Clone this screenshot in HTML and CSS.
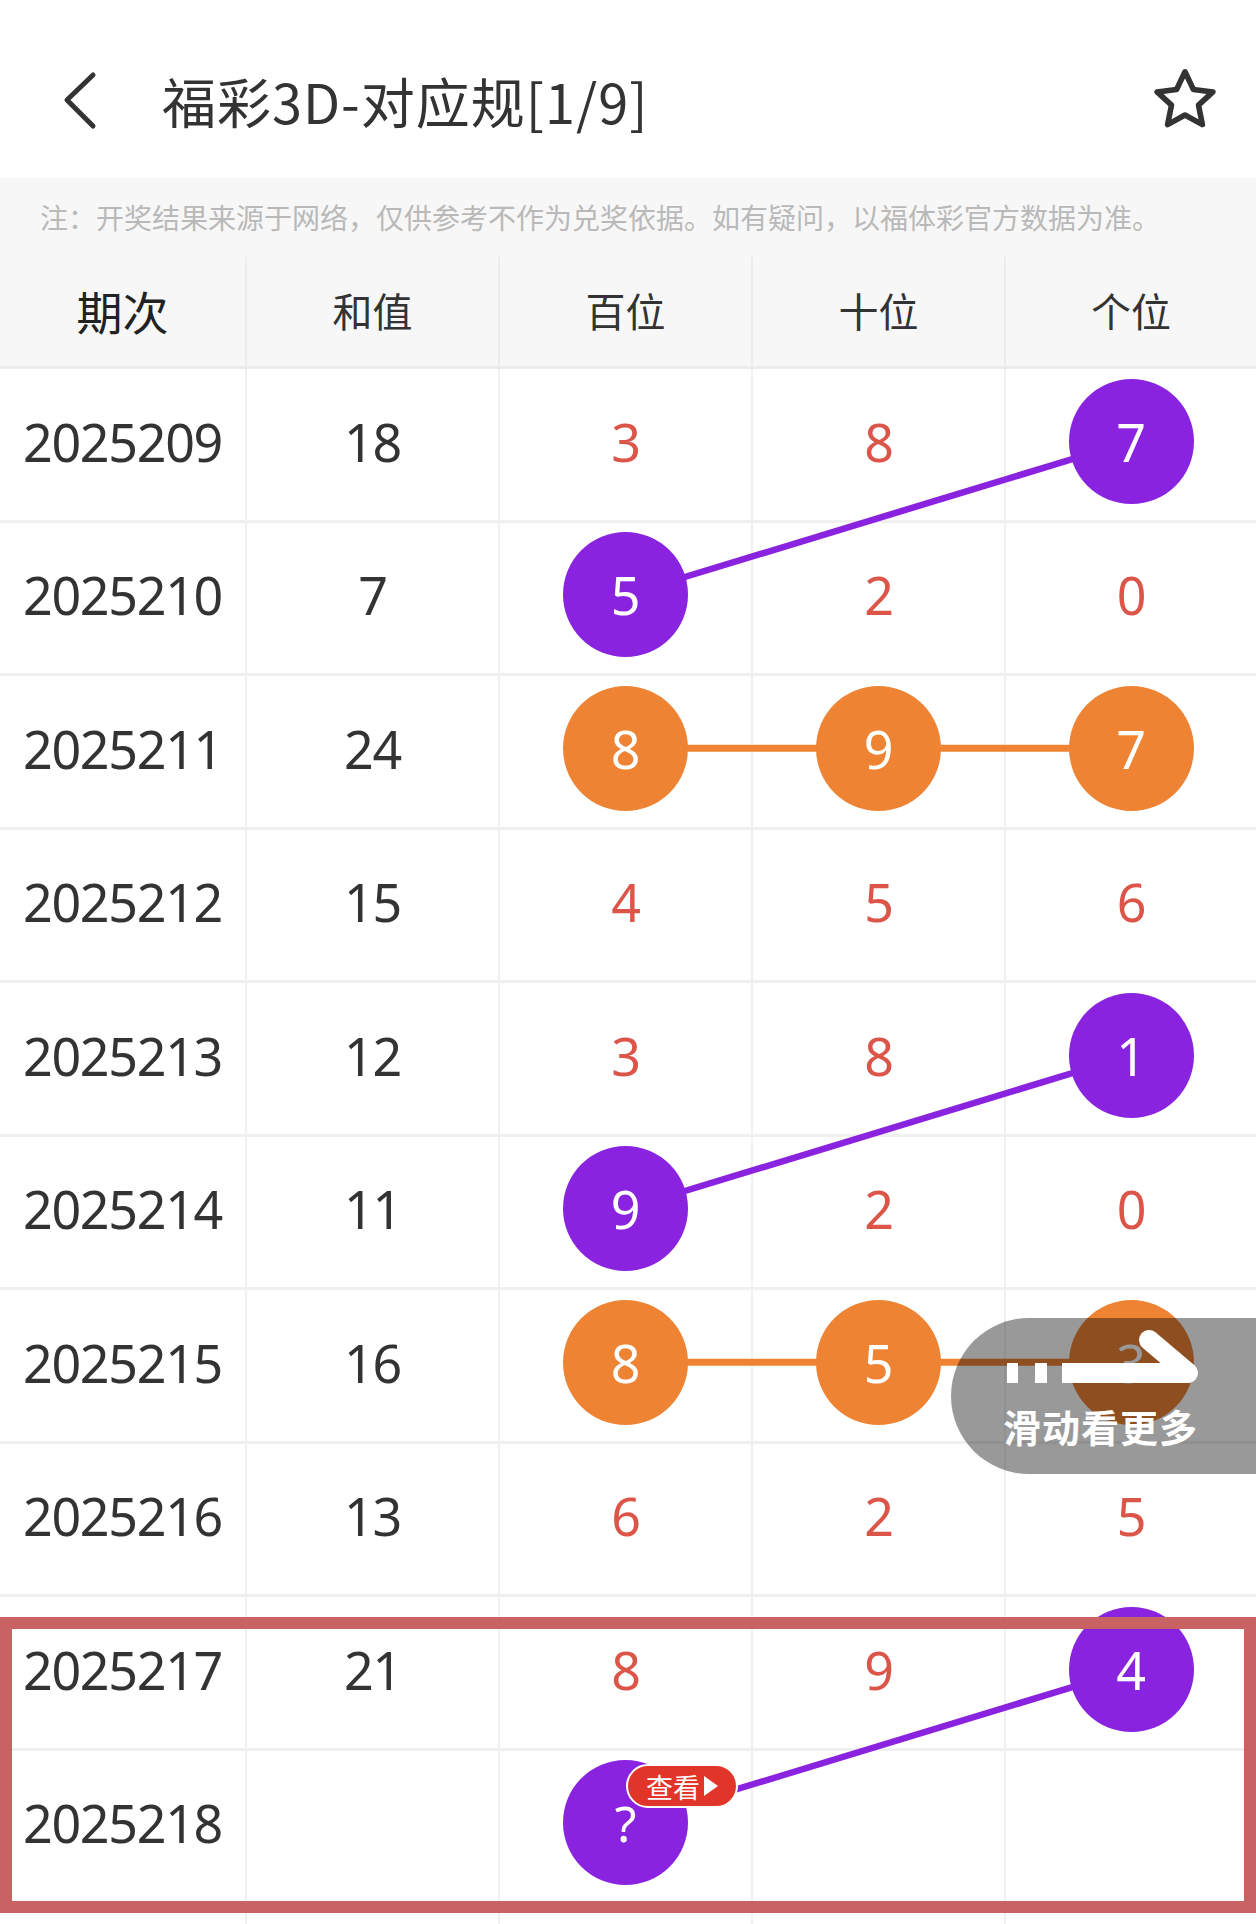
FILE: index.html
```html
<!DOCTYPE html>
<html lang="zh-CN">
<head>
<meta charset="utf-8">
<title>福彩3D-对应规[1/9]</title>
<link rel="stylesheet" href="styles.css">
</head>
<body>
<div class="page">
  <header class="nav">
    <svg class="back" viewBox="0 0 44 60" width="44" height="60"><polyline points="35,5 9,30 35,56" fill="none" stroke="#333" stroke-width="5" stroke-linecap="round" stroke-linejoin="round"/></svg>
    <h1 class="title">福彩3D-对应规[1/9]</h1>
    <svg class="star" viewBox="0 0 24 24" width="72" height="72"><polygon points="12,2.6 14.8,8.5 21.3,9.3 16.5,13.7 17.8,20.2 12,17 6.2,20.2 7.5,13.7 2.7,9.3 9.2,8.5" fill="none" stroke="#333" stroke-width="1.85" stroke-linejoin="round"/></svg>
  </header>
  <div class="notice">注：开奖结果来源于网络，仅供参考不作为兑奖依据。如有疑问，以福体彩官方数据为准。</div>
  <div class="table">
    <div class="thead">
      <div class="th th-main">期次</div>
      <div class="th">和值</div>
      <div class="th">百位</div>
      <div class="th">十位</div>
      <div class="th">个位</div>
    </div>
    <div class="tbody">
      <svg class="links" width="1256" height="1560" viewBox="0 0 1256 1560">
        <line x1="1131" y1="72.25" x2="626.5" y2="225.75" class="lp"/>
        <line x1="626.5" y1="379.25" x2="1131" y2="379.25" class="lo"/>
        <line x1="1131" y1="686.25" x2="626.5" y2="839.75" class="lp"/>
        <line x1="626.5" y1="993.25" x2="1131" y2="993.25" class="lo"/>
        <line x1="1131" y1="1300.25" x2="626.5" y2="1453.75" class="lp"/>
      </svg>
      <div class="row"><div class="td">2025209</div><div class="td">18</div><div class="td red">3</div><div class="td red">8</div><div class="td"><span class="ball purple">7</span></div></div>
      <div class="row"><div class="td">2025210</div><div class="td">7</div><div class="td"><span class="ball purple">5</span></div><div class="td red">2</div><div class="td red">0</div></div>
      <div class="row"><div class="td">2025211</div><div class="td">24</div><div class="td"><span class="ball orange">8</span></div><div class="td"><span class="ball orange">9</span></div><div class="td"><span class="ball orange">7</span></div></div>
      <div class="row"><div class="td">2025212</div><div class="td">15</div><div class="td red">4</div><div class="td red">5</div><div class="td red">6</div></div>
      <div class="row"><div class="td">2025213</div><div class="td">12</div><div class="td red">3</div><div class="td red">8</div><div class="td"><span class="ball purple">1</span></div></div>
      <div class="row"><div class="td">2025214</div><div class="td">11</div><div class="td"><span class="ball purple">9</span></div><div class="td red">2</div><div class="td red">0</div></div>
      <div class="row"><div class="td">2025215</div><div class="td">16</div><div class="td"><span class="ball orange">8</span></div><div class="td"><span class="ball orange">5</span></div><div class="td"><span class="ball orange">3</span></div></div>
      <div class="row"><div class="td">2025216</div><div class="td">13</div><div class="td red">6</div><div class="td red">2</div><div class="td red">5</div></div>
      <div class="row"><div class="td">2025217</div><div class="td">21</div><div class="td red">8</div><div class="td red">9</div><div class="td"><span class="ball purple">4</span></div></div>
      <div class="row"><div class="td">2025218</div><div class="td"></div><div class="td"><span class="ball purple q">?<span class="badge">查看<i class="tri"></i></span></span></div><div class="td"></div><div class="td"></div></div>
      <div class="row"><div class="td"></div><div class="td"></div><div class="td"></div><div class="td"></div><div class="td"></div></div>
    </div>
  </div>
  <div class="mark"></div>
  <div class="swipe">
    <svg class="swipe-arrow" viewBox="0 0 305 80" width="305" height="80">
      <rect x="56" y="45" width="11" height="20" fill="#fff"/>
      <rect x="84" y="45" width="12" height="20" fill="#fff"/>
      <line x1="121" y1="55" x2="236" y2="55" stroke="#fff" stroke-width="20" stroke-linecap="round"/>
      <line x1="198" y1="22" x2="237" y2="55" stroke="#fff" stroke-width="20" stroke-linecap="round"/>
      <rect x="111" y="45" width="14" height="20" fill="#fff"/>
    </svg>
    <div class="swipe-text">滑动看更多</div>
  </div>
</div>
</body>
</html>
```

FILE: styles.css
```css
* { box-sizing: border-box; }
html, body { margin: 0; padding: 0; background: #fff; }
body { width: 1256px; }
.page {
  position: relative;
  width: 1256px;
  height: 1924px;
  overflow: hidden;
  font-family: "Noto Sans", "Noto Sans CJK SC", sans-serif;
  color: #333;
}
.nav {
  height: 178px;
  padding-top: 22px;
  display: flex;
  align-items: center;
}
.back { margin-left: 58px; flex: none; }
.title {
  margin: 0 0 0 60px;
  font-family: "Noto Sans CJK SC", sans-serif;
  font-weight: 400;
  font-size: 54px;
  color: #333;
  flex: 1;
  letter-spacing: 1px;
}
.star { margin-right: 35px; flex: none; }
.notice {
  height: 79px;
  line-height: 79px;
  background: #f7f7f7;
  padding-left: 40px;
  font-family: "Noto Sans CJK SC", sans-serif;
  font-size: 28px;
  color: #b9b9b9;
  white-space: nowrap;
}
.thead, .row {
  display: grid;
  grid-template-columns: 247px 253px 253px 253px 250px;
}
.thead {
  height: 112px;
  background: #f7f7f7;
  border-bottom: 3px solid #ececec;
}
.th {
  display: flex;
  align-items: center;
  justify-content: center;
  padding-bottom: 4px;
  font-family: "Noto Sans CJK SC", sans-serif;
  font-size: 40px;
  color: #333;
  border-right: 2px solid #ececec;
}
.th:last-child, .td:last-child { border-right: 0; }
.th-main { font-size: 46px; font-weight: 400; color: #222; }
.tbody { position: relative; }
.links { position: absolute; left: 0; top: 0; z-index: 1; }
.lp { stroke: #8a23e0; stroke-width: 6.5; }
.lo { stroke: #ee8334; stroke-width: 7; }
.row {
  height: 153.5px;
  background: #fff;
  border-bottom: 3px solid #f0f0f0;
}
.td {
  display: flex;
  align-items: center;
  justify-content: center;
  padding-bottom: 6px;
  font-size: 52px;
  letter-spacing: -1.3px;
  color: #333;
  border-right: 2px solid #f0f0f0;
}
.td.red { color: #dc5549; }
.ball {
  position: relative;
  z-index: 2;
  width: 125px;
  height: 125px;
  border-radius: 50%;
  display: flex;
  align-items: center;
  justify-content: center;
  color: #fff;
  font-size: 52px;
  letter-spacing: 0;
}
.purple { background: #8a23e0; }
.orange { background: #ee8334; }
.q { font-size: 50px; }
.badge {
  position: absolute;
  left: 63px;
  top: 4px;
  width: 112px;
  height: 44px;
  border: 2px solid #fff;
  border-radius: 22px;
  background: #e2352a;
  display: flex;
  align-items: center;
  justify-content: center;
  gap: 4px;
  font-family: "Noto Sans CJK SC", sans-serif;
  font-size: 27px;
  line-height: 1;
  color: #fff;
}
.tri {
  display: block;
  width: 0;
  height: 0;
  border-top: 10px solid transparent;
  border-bottom: 10px solid transparent;
  border-left: 14px solid #fff;
}
.mark {
  position: absolute;
  left: 0;
  top: 1617px;
  width: 1256px;
  height: 296px;
  border: 12px solid #c96262;
  z-index: 5;
}
.swipe {
  position: absolute;
  left: 951px;
  top: 1318px;
  width: 305px;
  height: 156px;
  background: rgba(0, 0, 0, 0.4);
  border-radius: 78px 0 0 78px;
  z-index: 6;
}
.swipe-arrow { display: block; }
.swipe-text {
  padding-left: 52px;
  margin-top: 8px;
  font-family: "Noto Sans CJK SC", sans-serif;
  font-weight: 700;
  font-size: 38px;
  line-height: 40px;
  color: #fff;
  letter-spacing: 1px;
}
```
